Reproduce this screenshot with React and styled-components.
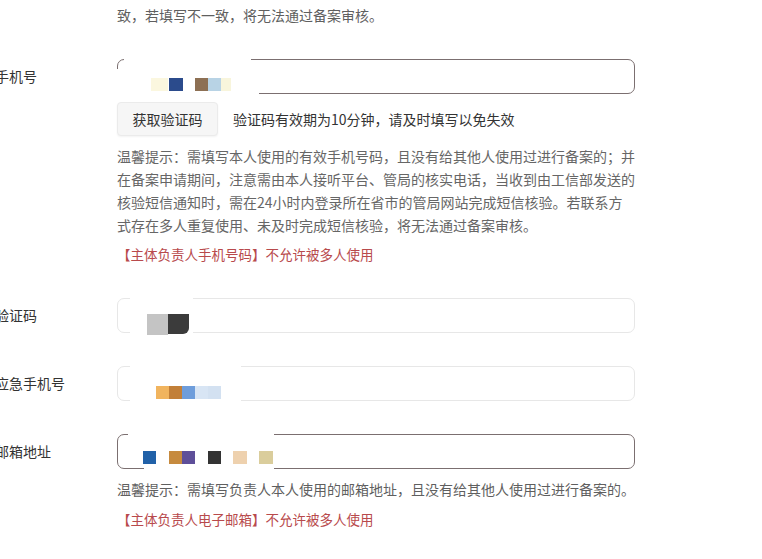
import React from "react";
import styled, { createGlobalStyle } from "styled-components";

const Global = createGlobalStyle`
  html, body { margin: 0; padding: 0; background: #ffffff; }
  body {
    font-family: "Noto Sans CJK SC", "Noto Sans", sans-serif;
    font-size: 14px;
    color: #333;
    overflow: hidden;
  }
`;

const Page = styled.div`
  width: 762px;
  height: 559px;
  padding-top: 4px;
  box-sizing: border-box;
  overflow: hidden;
`;

const Row = styled.div`
  display: grid;
  grid-template-columns: 122px 520px;
  margin-left: -5px;
  margin-top: ${(p) => p.$mt || 0}px;
`;

const Label = styled.div`
  font-size: 14px;
  line-height: 35px;
  color: #333;
  white-space: nowrap;
`;

const Field = styled.div`
  display: flex;
  flex-direction: column;
  grid-column: 2;
`;

const Note = styled.div`
  font-size: 14px;
  line-height: 22px;
  color: #5f5f5f;
  margin-top: ${(p) => p.$mt || 0}px;
`;

const Hint = styled.div`
  font-size: 14px;
  line-height: 23px;
  color: #666;
  margin-top: ${(p) => p.$mt || 0}px;
  white-space: nowrap;
`;

const Warn = styled.div`
  font-size: 13.5px;
  line-height: 22px;
  color: #b84a4c;
  margin-top: ${(p) => p.$mt || 0}px;
`;

const InputBox = styled.div`
  position: relative;
  width: 518px;
  height: 35px;
  box-sizing: border-box;
  border: 1px solid ${(p) => (p.$active ? "#7b6f70" : "#e7e7e7")};
  border-radius: 7px;
  background: #fff;
`;

const Patch = styled.span`
  position: absolute;
  left: ${(p) => p.$x}px;
  top: ${(p) => p.$y}px;
  width: ${(p) => p.$w}px;
  height: ${(p) => p.$h}px;
  background: ${(p) => p.$c || "#ffffff"};
  border-bottom-right-radius: ${(p) => p.$r || 0}px;
`;

const CodeLine = styled.div`
  display: flex;
  align-items: center;
  gap: 15px;
  margin-top: 8px;
`;

const Button = styled.button`
  width: 101px;
  height: 34px;
  box-sizing: border-box;
  border: 1px solid #ebebeb;
  border-radius: 4px;
  background: #f6f6f6;
  font-family: inherit;
  font-size: 14px;
  color: #333;
  padding: 0;
  box-shadow: 0 1px 2px rgba(0, 0, 0, 0.05);
`;

const CodeText = styled.span`
  font-size: 14px;
  color: #333;
`;

function Masked({ active, masks, squares }) {
  return (
    <InputBox $active={active}>
      {masks.map((m, i) => (
        <Patch key={"m" + i} $x={m[0]} $y={m[1]} $w={m[2]} $h={m[3]} />
      ))}
      {squares.map((s, i) => (
        <Patch
          key={"s" + i}
          $x={s[0]}
          $y={s[1]}
          $w={s[2]}
          $h={s[3]}
          $c={s[4]}
          $r={s[5]}
        />
      ))}
    </InputBox>
  );
}

const phoneMasks = [
  [6, -2, 127, 5],
  [-2, 9, 6, 28],
  [-2, 30, 143, 6],
];
const phoneSquares = [
  [33, 18, 17, 13, "#fbf7df"],
  [51, 18, 14, 13, "#2b4b8c"],
  [77, 18, 13, 13, "#8d7054"],
  [90, 18, 13, 13, "#b8d3e5"],
  [103, 18, 10, 13, "#f8f5dc"],
];

const codeMasks = [
  [12, -2, 63, 4],
  [12, 31, 63, 5],
];
const codeSquares = [
  [29, 15, 21, 21, "#c4c4c4"],
  [50, 15, 21, 20, "#3b3b3b", 6],
];

const emgMasks = [
  [12, -2, 111, 4],
  [12, 31, 111, 5],
];
const emgSquares = [
  [38, 19, 13, 13, "#f1b45e"],
  [51, 19, 13, 13, "#c27f38"],
  [64, 19, 13, 13, "#6e9ddb"],
  [77, 19, 13, 13, "#d8e5f4"],
  [90, 19, 13, 13, "#d3e1f1"],
];

const mailMasks = [
  [10, -2, 146, 4],
  [26, 31, 130, 5],
];
const mailSquares = [
  [25, 16, 13, 13, "#2161a8"],
  [51, 16, 13, 13, "#c68a3e"],
  [64, 16, 13, 13, "#5e4f99"],
  [90, 16, 13, 13, "#333333"],
  [115, 16, 14, 13, "#eed1ae"],
  [141, 16, 14, 13, "#dacd9c"],
];

export default function App() {
  return (
    <Page>
      <Global />
      <Row>
        <Field>
          <Note>致，若填写不一致，将无法通过备案审核。</Note>
        </Field>
      </Row>

      <Row $mt={33}>
        <Label>手机号</Label>
        <Field>
          <Masked active masks={phoneMasks} squares={phoneSquares} />
          <CodeLine>
            <Button type="button">获取验证码</Button>
            <CodeText>验证码有效期为10分钟，请及时填写以免失效</CodeText>
          </CodeLine>
          <Hint $mt={9}>
            温馨提示：需填写本人使用的有效手机号码，且没有给其他人使用过进行备案的；并
            <br />
            在备案申请期间，注意需由本人接听平台、管局的核实电话，当收到由工信部发送的
            <br />
            核验短信通知时，需在24小时内登录所在省市的管局网站完成短信核验。若联系方
            <br />
            式存在多人重复使用、未及时完成短信核验，将无法通过备案审核。
          </Hint>
          <Warn $mt={6}>【主体负责人手机号码】不允许被多人使用</Warn>
        </Field>
      </Row>

      <Row $mt={33}>
        <Label>验证码</Label>
        <Field>
          <Masked masks={codeMasks} squares={codeSquares} />
        </Field>
      </Row>

      <Row $mt={33}>
        <Label>应急手机号</Label>
        <Field>
          <Masked masks={emgMasks} squares={emgSquares} />
        </Field>
      </Row>

      <Row $mt={33}>
        <Label>邮箱地址</Label>
        <Field>
          <Masked active masks={mailMasks} squares={mailSquares} />
          <Note $mt={9}>
            温馨提示：需填写负责人本人使用的邮箱地址，且没有给其他人使用过进行备案的。
          </Note>
          <Warn $mt={8}>【主体负责人电子邮箱】不允许被多人使用</Warn>
        </Field>
      </Row>
    </Page>
  );
}
